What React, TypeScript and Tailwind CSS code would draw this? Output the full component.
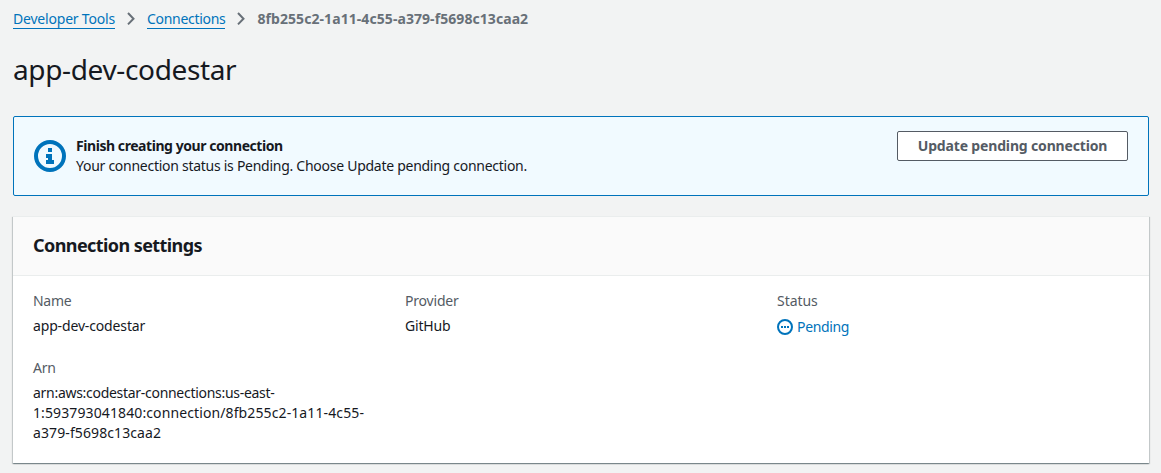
import type { ReactNode } from "react";

function Chevron() {
  return (
    <svg width="10" height="14" viewBox="0 0 10 14" fill="none" stroke="#687078" strokeWidth="2" className="mx-[11px] shrink-0">
      <path d="M2 1L7.5 6.7L2 12.4" />
    </svg>
  );
}

function Crumb({ children, className }: { children: ReactNode; className: string }) {
  return (
    <a href="#" className={`block h-[20px] whitespace-nowrap border-b border-[#0073bb] leading-[20px] text-[#0073bb] ${className}`}>
      {children}
    </a>
  );
}

function Field({ label, labelClass, children }: { label: string; labelClass: string; children: ReactNode }) {
  return (
    <div className="w-[372px]">
      <div className={`mb-[5px] w-fit leading-5 text-[#545b64] ${labelClass}`}>{label}</div>
      {children}
    </div>
  );
}

export default function App() {
  return (
    <main className="h-[473px] overflow-hidden bg-[#f2f3f3] pl-[13px] pr-[12px] pt-[9px] font-['Noto_Sans',sans-serif] text-[14px] leading-5 text-[#16191f]">
      <nav className="flex h-5 items-center">
        <Crumb className="tracking-[-0.2px]">Developer Tools</Crumb>
        <Chevron />
        <Crumb className="tracking-[-0.29px]">Connections</Crumb>
        <Chevron />
        <span className="whitespace-nowrap font-bold tracking-[0.07px] text-[#687078]">8fb255c2-1a11-4c55-a379-f5698c13caa2</span>
      </nav>
      <h1 className="mt-[22px] w-fit text-[28px] leading-[36px] tracking-[-0.36px]">app-dev-codestar</h1>

      <section className="mt-[29px] flex h-[80px] rounded-[2px] border border-[#0073bb] bg-[#f1faff] pl-[20px] pr-[20px]">
        <svg width="32" height="32" viewBox="0 0 32 32" className="mt-[23px] shrink-0">
          <circle cx="16" cy="16" r="14" fill="none" stroke="#0073bb" strokeWidth="4" />
          <path d="M14 8h4v4h-4zM12 14h6v6h2v4h-8v-4h2v-2h-2z" fill="#0073bb" />
        </svg>
        <div className="ml-[10px] mt-[19px] flex-1 whitespace-nowrap">
          <div className="w-fit font-bold tracking-[-0.44px]">Finish creating your connection</div>
          <div className="w-fit tracking-[-0.27px]">Your connection status is Pending. Choose Update pending connection.</div>
        </div>
        <button className="mt-[14px] flex h-[30px] w-[231px] items-center justify-center whitespace-nowrap rounded-[2px] border border-[#545b64] bg-white font-bold text-[#545b64]">
          <span className="tracking-[-0.16px]">Update pending connection</span>
        </button>
      </section>

      <section className="mt-[20px] h-[247px] border-t border-[#eaeded] bg-white shadow-[0_1px_1px_0_rgba(0,28,36,0.3),1px_1px_1px_0_rgba(0,28,36,0.15),-1px_1px_1px_0_rgba(0,28,36,0.15)]">
        <header className="flex h-[59px] items-center border-b border-[#eaeded] bg-[#fafafa] pl-[20px]">
          <h2 className="-mt-[3px] text-[18px] font-bold leading-[22px] tracking-[-0.58px]">Connection settings</h2>
        </header>
        <div className="flex flex-wrap gap-y-[20px] pl-[20px] pt-[15px]">
          <Field label="Name" labelClass="tracking-[-0.3px]">
            <div className="w-fit tracking-[-0.15px]">app-dev-codestar</div>
          </Field>
          <Field label="Provider" labelClass="tracking-[-0.2px]">
            <div className="w-fit tracking-[-0.2px]">GitHub</div>
          </Field>
          <Field label="Status" labelClass="tracking-[-0.05px]">
            <div className="flex h-[22px] items-center text-[#0073bb]">
              <svg width="16" height="16" viewBox="0 0 16 16" className="mr-1">
                <circle cx="8" cy="8" r="7" fill="none" stroke="#0073bb" strokeWidth="2" />
                <path d="M4 7h2v2H4zM7 7h2v2H7zM10 7h2v2h-2z" fill="#0073bb" />
              </svg>
              <span className="tracking-[-0.34px]">Pending</span>
            </div>
          </Field>
          <Field label="Arn" labelClass="tracking-[-0.3px]">
            <div className="whitespace-nowrap">
              <div className="tracking-[-0.29px]">arn:aws:codestar-connections:us-east-</div>
              <div className="tracking-[0.11px]">1:593793041840:connection/8fb255c2-1a11-4c55-</div>
              <div className="tracking-[0.1px]">a379-f5698c13caa2</div>
            </div>
          </Field>
        </div>
      </section>
    </main>
  );
}
